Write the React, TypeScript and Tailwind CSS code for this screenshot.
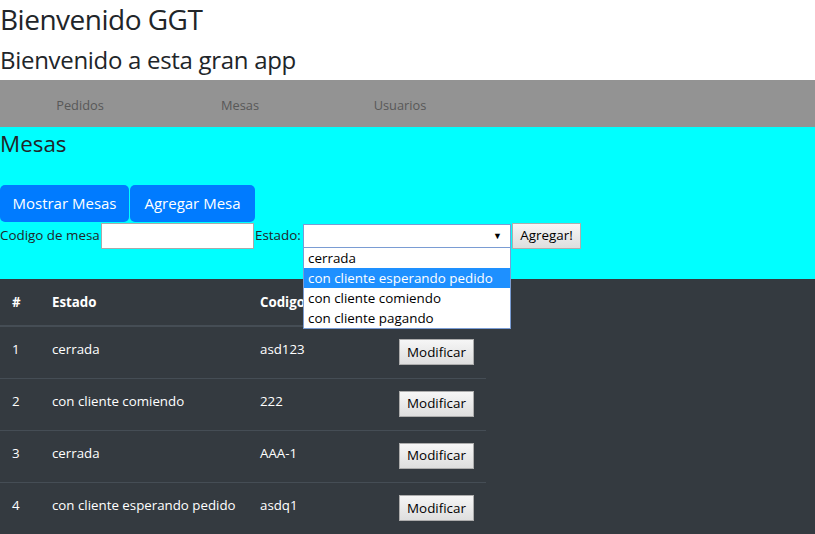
import React from 'react'

const rows = [
  { id: 1, estado: 'cerrada', codigo: 'asd123' },
  { id: 2, estado: 'con cliente comiendo', codigo: '222' },
  { id: 3, estado: 'cerrada', codigo: 'AAA-1' },
  { id: 4, estado: 'con cliente esperando pedido', codigo: 'asdq1' },
]

const opciones = ['cerrada', 'con cliente esperando pedido', 'con cliente comiendo', 'con cliente pagando']

const grayBtn =
  'bg-gradient-to-b from-[#f6f6f6] to-[#dedede] border border-[#adadad] text-black text-[13.4px] leading-none'

export default function App() {
  return (
    <div className="w-[815px] h-[534px] overflow-hidden bg-white text-[#212529] font-['Open_Sans',sans-serif] text-[13.4px]">
      <h1 className="text-[28px] leading-[38px] tracking-[-0.5px] font-medium mb-[6px]">Bienvenido GGT</h1>
      <h2 className="text-[24px] leading-[31px] tracking-[-0.3px] font-medium mb-[5px]">Bienvenido a esta gran app</h2>

      {/* Nav */}
      <nav className="h-[47px] bg-[#939393] flex items-center pt-[4px] text-[#585858] text-[12.8px]">
        <a className="w-[160px] text-center">Pedidos</a>
        <a className="w-[160px] text-center">Mesas</a>
        <a className="w-[160px] text-center">Usuarios</a>
      </nav>

      {/* Mesas section */}
      <section className="bg-[#00ffff] h-[152px] pt-[3px]">
        <h3 className="text-[22.4px] leading-[27px] font-medium">Mesas</h3>
        <div className="flex gap-[1px] mt-[28px]">
          <button className="h-[37px] w-[129px] rounded-[5px] bg-[#007bff] text-white text-[15px]">Mostrar Mesas</button>
          <button className="h-[37px] w-[125px] rounded-[5px] bg-[#007bff] text-white text-[15px]">Agregar Mesa</button>
        </div>
        <div className="flex items-center h-[27px]">
          <span className="w-[101px]">Codigo de mesa</span>
          <input className="w-[153px] h-[26px] bg-white border border-[#a9a9a9] outline-none" />
          <span className="w-[49px] pl-[1px]">Estado:</span>
          <div className="relative mt-[1px]">
            <div className="w-[208px] h-[24px] bg-white border border-[#7a9cd3] flex items-center justify-end pr-[8px]">
              <span className="text-[9px] text-black">▼</span>
            </div>
            <ul className="absolute left-0 top-[23px] w-[208px] bg-white border border-[#7a9cd3] text-black text-[13.4px] z-10">
              {opciones.map((o, i) => (
                <li
                  key={o}
                  className={`h-[20px] leading-[20px] pl-[4px] ${i === 1 ? 'bg-[#1e90ff] text-white' : ''}`}
                >
                  {o}
                </li>
              ))}
            </ul>
          </div>
          <button className={`${grayBtn} h-[26px] w-[69px] ml-[1px]`}>Agregar!</button>
        </div>
      </section>

      {/* Tabla */}
      <div className="bg-[#343a40] h-[255px]">
        <table className="w-[486px] text-white border-collapse text-[13.3px]">
          <thead>
            <tr className="h-[47px] border-b-2 border-[#454d55] font-bold">
              <th className="w-[40px] pl-[12px] text-left align-middle pt-[2px]">#</th>
              <th className="w-[208px] pl-[12px] text-left align-middle pt-[2px]">Estado</th>
              <th className="w-[139px] pl-[12px] text-left align-middle pt-[2px]">Codigo</th>
              <th className="pl-[12px]"></th>
            </tr>
          </thead>
          <tbody>
            {rows.map((r) => (
              <tr key={r.id} className="h-[52px] border-t border-[#454d55] first:border-t-0">
                <td className="pl-[12px] align-middle pb-[5px]">{r.id}</td>
                <td className="pl-[12px] align-middle pb-[5px]">{r.estado}</td>
                <td className="pl-[12px] align-middle pb-[5px]">{r.codigo}</td>
                <td className="pl-[12px] align-middle">
                  <button className={`${grayBtn} h-[26px] w-[75px]`}>Modificar</button>
                </td>
              </tr>
            ))}
          </tbody>
        </table>
      </div>
    </div>
  )
}
